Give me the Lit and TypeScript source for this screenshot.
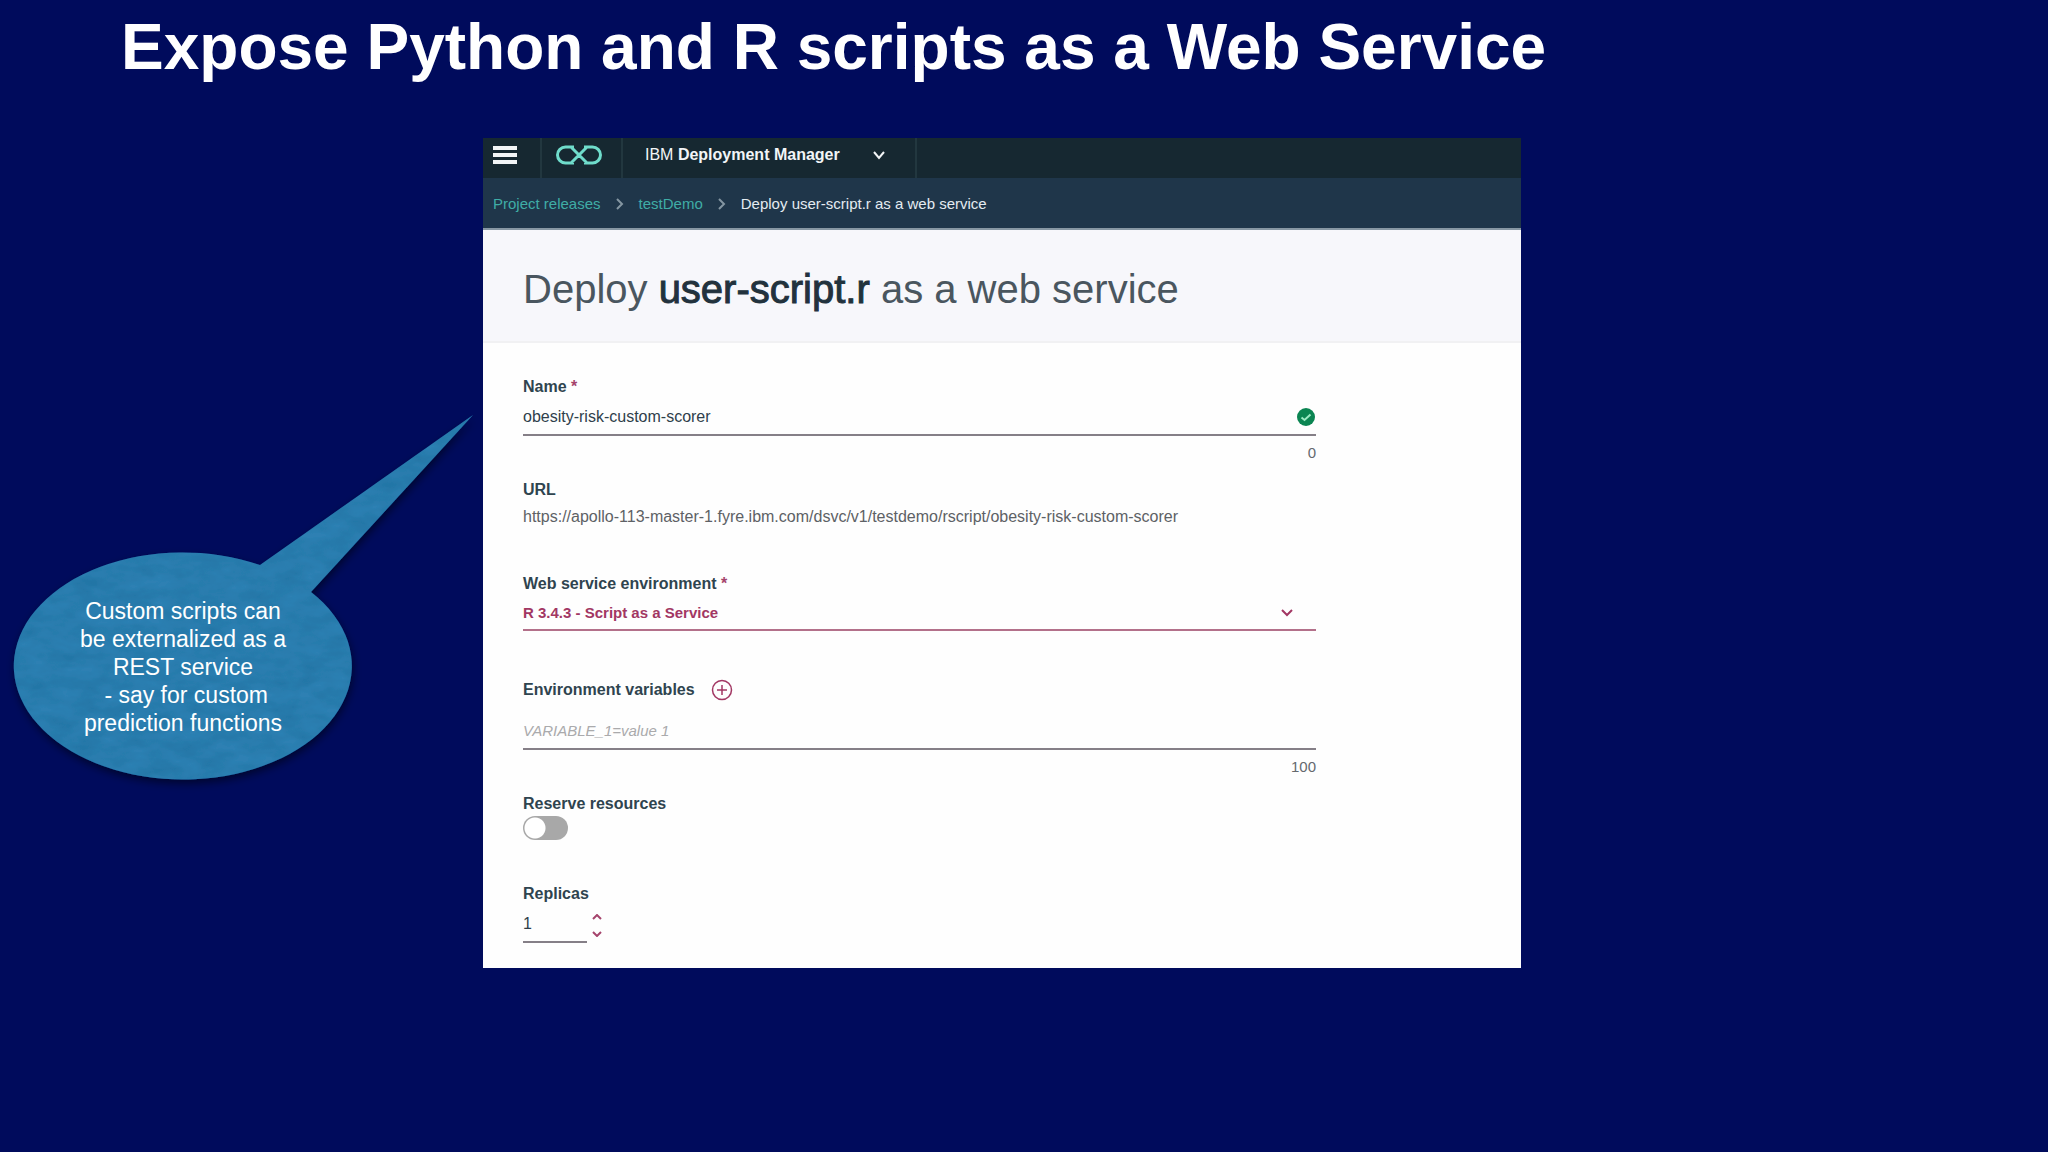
import { LitElement, html, svg, css } from "lit";
import { customElement, state } from "lit/decorators.js";

const chevron = (points: string) => svg`<polyline points=${points} fill="none" stroke="currentColor" stroke-width="2"></polyline>`;

@customElement("callout-bubble")
class CalloutBubble extends LitElement {
  static styles = css`
    :host {
      display: grid;
      width: 480px;
      grid-template-columns: 366px 1fr;
      grid-template-rows: 140px 1fr;
    }
    .shape {
      grid-area: 1 / 1 / 3 / 3;
      width: 480px;
      height: 384px;
      overflow: visible;
    }
    .text {
      grid-area: 2 / 1;
      margin: 0;
      padding-bottom: 20px;
      align-self: center;
      position: relative;
      text-align: center;
      color: #fff;
      font-size: 23px;
      line-height: 28px;
    }
  `;

  render() {
    return html`
      <svg class="shape" viewBox="0 0 480 384" aria-hidden="true">
        <defs>
          <filter id="paper" x="0" y="0" width="100%" height="100%" color-interpolation-filters="sRGB">
            <feTurbulence type="fractalNoise" baseFrequency="0.04 0.08" numOctaves="3" seed="7" result="noise"></feTurbulence>
            <feColorMatrix in="noise" type="matrix" values="0 0 0 0 0.1  0 0 0 0 0.42  0 0 0 0 0.6  0.8 0 0 0 -0.2" result="grain"></feColorMatrix>
            <feComposite in="grain" in2="SourceGraphic" operator="in" result="inside"></feComposite>
            <feMerge><feMergeNode in="SourceGraphic"></feMergeNode><feMergeNode in="inside"></feMergeNode></feMerge>
          </filter>
          <filter id="shadow" x="-10%" y="-10%" width="120%" height="120%">
            <feDropShadow dx="1" dy="4" stdDeviation="4" flood-color="#000" flood-opacity="0.5"></feDropShadow>
          </filter>
        </defs>
        <g filter="url(#shadow)">
          <path filter="url(#paper)" fill="#2d80b3"
            d="M260 150 L473 0 L311 177 A169 113.5 0 1 1 260 150 Z"></path>
        </g>
      </svg>
      <p class="text">Custom scripts can<br />be externalized as a<br />REST service<br />&nbsp;- say for custom<br />prediction functions</p>
    `;
  }
}

@customElement("deploy-panel")
class DeployPanel extends LitElement {
  @state() private replicas = 1;

  static styles = css`
    :host { display: block; background: #fefefe; color: #2f3f4b; font-size: 16px; line-height: 20px; }
    * { box-sizing: border-box; }
    button { padding: 0; border: 0; background: none; color: inherit; font: inherit; display: flex; align-items: center; }
    input, select { font: inherit; color: inherit; border-radius: 0; outline: none; }
    svg { display: block; }

    .topbar { display: flex; height: 40px; background: #162831; color: #f2f5f7; }
    .topbar > * { padding-bottom: 6px; border-right: 2px solid #22373f; }
    .menu { width: 59px; padding-left: 10px; }
    .brand { display: flex; align-items: center; width: 81px; padding-left: 13px; color: #6fdccb; }
    .product { width: 294px; padding-left: 22px; gap: 33px; }

    .crumbs { display: flex; align-items: center; height: 52px; padding: 2px 0 0 10px; gap: 15px; background: #1f364a; border-bottom: 2px solid #8797a3; color: #e4ebf1; font-size: 15px; }
    .crumbs a { color: #3fada6; text-decoration: none; }
    .crumbs svg { color: #8496a2; }

    .header { height: 113px; padding: 35px 40px 0; background: #f7f7fb; border-bottom: 2px solid #f1f1f3; }
    h2 { margin: 0; font-size: 40px; line-height: 48px; font-weight: 400; color: #4a565f; }
    h2 strong { font-weight: 400; color: #22323d; -webkit-text-stroke: 1px #22323d; }

    form { display: grid; grid-template-columns: 793fr 205fr; padding: 34px 0 25px 40px; }
    .fields { display: flex; flex-direction: column; min-width: 0; }
    .label { font-weight: 700; color: #2f444f; }
    .star { color: #a5446c; }
    .line { display: flex; align-items: center; margin-top: 3px; height: 36px; border-bottom: 2px solid #857f87; }
    .line input { flex: 1; min-width: 0; height: 100%; padding: 0; border: 0; background: none; }
    .count { margin-top: 7px; text-align: right; color: #65696e; font-size: 15px; }
    .url-label { margin-top: 17px; }
    .url { margin: 7px 0 0; color: #5d6165; white-space: nowrap; }
    .env { margin-top: 47px; }
    .line.select { height: 34px; border-color: #b3708a; color: #a23763; padding-right: 22px; }
    select { flex: 1; appearance: none; border: 0; padding: 0; height: 100%; background: none; font-size: 15px; font-weight: 700; }
    .vars { display: flex; align-items: center; gap: 16px; height: 20px; margin-top: 49px; color: #a23763; }
    .line.wide { margin-top: 14px; }
    ::placeholder { color: #aaaaac; font-size: 15px; font-style: italic; opacity: 1; }
    .reserve { margin-top: 17px; }
    .toggle { appearance: none; margin: 2px 0 0; width: 45px; height: 24px; border-radius: 12px; background: radial-gradient(circle at 12px 12px, #fff 10px, #a8a8a8 11px); }
    .toggle:checked { background: radial-gradient(circle at 33px 12px, #fff 10px, #a23763 11px); }
    .replicas { margin-top: 44px; }
    .stepper { display: flex; gap: 4px; }
    .stepper .line { width: 64px; }
    .arrows { display: flex; flex-direction: column; gap: 7px; padding-top: 8px; color: #a5446c; }
    .arrows button { padding: 2px 0; }
    input[type="number"] { appearance: textfield; }
    input[type="number"]::-webkit-inner-spin-button { appearance: none; }
  `;

  private step(by: number) {
    this.replicas = Math.max(1, this.replicas + by);
  }

  render() {
    const separator = html`<svg width="8" height="12" viewBox="0 0 8 12" aria-hidden="true">${chevron("1,1 6,6 1,11")}</svg>`;
    return html`
      <div class="topbar">
        <button class="menu" aria-label="Menu">
          <svg width="24" height="18" viewBox="0 0 24 18" fill="currentColor"><path d="M0 0h24v4H0zM0 7h24v4H0zM0 14h24v4H0z"></path></svg>
        </button>
        <div class="brand">
          <svg width="48" height="20" viewBox="0 0 48 20" fill="none" stroke="currentColor" stroke-width="3" aria-hidden="true">
            <path d="M19 2H10.500a8 8 0 0 0 0 16H19M29 2h8.500a8 8 0 0 1 0 16H29M16.500 2.500l15 15M31.500 2.500l-15 15"></path>
          </svg>
        </div>
        <button class="product">
          <span>IBM <strong>Deployment Manager</strong></span>
          <svg width="12" height="10" viewBox="0 0 12 10" aria-hidden="true">${chevron("1,2 6,8 11,2")}</svg>
        </button>
      </div>
      <nav class="crumbs" aria-label="Breadcrumb">
        <a href="#releases">Project releases</a>${separator}<a href="#testDemo">testDemo</a>${separator}<span>Deploy user-script.r as a web service</span>
      </nav>
      <div class="header"><h2>Deploy <strong>user-script.r</strong> as a web service</h2></div>
      <form @submit=${(e: Event) => e.preventDefault()}>
        <div class="fields">
          <label class="label" for="name">Name <span class="star">*</span></label>
          <div class="line">
            <input id="name" type="text" value="obesity-risk-custom-scorer" />
            <svg width="20" height="20" viewBox="0 0 20 20" aria-hidden="true">
              <circle cx="10" cy="10" r="9" fill="#0b8552"></circle>
              <path d="M5.500 10.500l3 2.500 6-5.500" fill="none" stroke="#9deac4" stroke-width="2"></path>
            </svg>
          </div>
          <div class="count">0</div>

          <div class="label url-label">URL</div>
          <p class="url">https://apollo-113-master-1.fyre.ibm.com/dsvc/v1/testdemo/rscript/obesity-risk-custom-scorer</p>

          <label class="label env" for="environment">Web service environment <span class="star">*</span></label>
          <div class="line select">
            <select id="environment"><option>R 3.4.3 - Script as a Service</option></select>
            <svg width="14" height="10" viewBox="0 0 14 10" aria-hidden="true">${chevron("2,2 7,7 12,2")}</svg>
          </div>

          <div class="vars">
            <label class="label" for="variable">Environment variables</label>
            <button type="button" aria-label="Add variable">
              <svg width="22" height="22" viewBox="0 0 22 22" fill="none" stroke="currentColor" stroke-width="1.500">
                <circle cx="11" cy="11" r="9.500"></circle><path d="M11 6v10M6 11h10"></path>
              </svg>
            </button>
          </div>
          <div class="line wide"><input id="variable" type="text" placeholder="VARIABLE_1=value 1" /></div>
          <div class="count">100</div>

          <label class="label reserve" for="reserve">Reserve resources</label>
          <input class="toggle" id="reserve" type="checkbox" role="switch" />

          <label class="label replicas" for="replicas">Replicas</label>
          <div class="stepper">
            <div class="line"><input id="replicas" type="number" min="1" .value=${String(this.replicas)} /></div>
            <div class="arrows">
              <button type="button" aria-label="Increase" @click=${() => this.step(1)}>
                <svg width="12" height="6" viewBox="0 0 12 6">${chevron("2,5 6,1 10,5")}</svg>
              </button>
              <button type="button" aria-label="Decrease" @click=${() => this.step(-1)}>
                <svg width="12" height="6" viewBox="0 0 12 6">${chevron("2,1 6,5 10,1")}</svg>
              </button>
            </div>
          </div>
        </div>
      </form>
    `;
  }
}

@customElement("app-root")
class AppRoot extends LitElement {
  static styles = css`
    :host {
      display: block;
      min-height: 100vh;
      background: #000b5c;
      font-family: "Liberation Sans", Arial, sans-serif;
    }
    h1 {
      margin: 0;
      padding: 11px 121px 0;
      height: 138px;
      box-sizing: border-box;
      color: #fff;
      font-size: 64px;
      line-height: 72px;
      white-space: nowrap;
    }
    .stage { display: grid; grid-template-columns: 483fr 1038fr 527fr; align-items: start; }
    .aside { padding-top: 277px; min-width: 0; }
  `;

  render() {
    return html`
      <h1>Expose Python and R scripts as a Web Service</h1>
      <div class="stage">
        <div class="aside"><callout-bubble></callout-bubble></div>
        <deploy-panel></deploy-panel>
      </div>
    `;
  }
}
